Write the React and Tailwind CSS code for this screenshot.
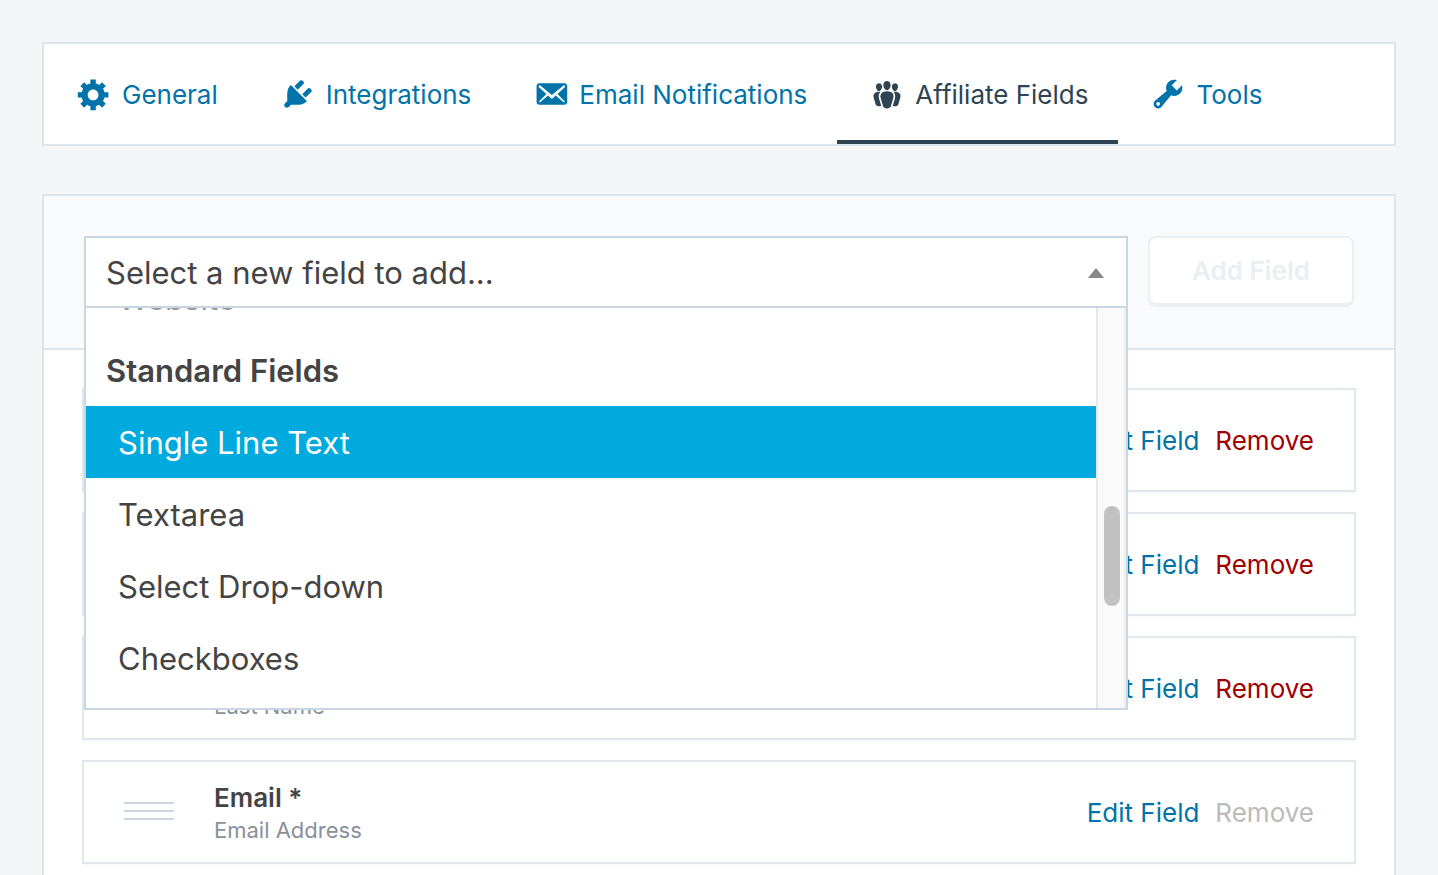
const gearPath =
  'M18 12h-2.18c-.17.7-.44 1.35-.81 1.93l1.54 1.54-2.1 2.1-1.54-1.54c-.58.36-1.23.63-1.91.79V19H8v-2.18c-.68-.16-1.33-.43-1.91-.79l-1.54 1.54-2.12-2.12 1.54-1.54c-.36-.58-.63-1.23-.79-1.91H1V9.03h2.17c.16-.7.44-1.35.8-1.94L2.43 5.55l2.1-2.1 1.54 1.54c.58-.37 1.24-.64 1.93-.81V2h3v2.18c.68.16 1.33.43 1.91.79l1.54-1.54 2.12 2.12-1.54 1.54c.36.59.64 1.24.8 1.94H18V12zm-8.5 1.5c1.66 0 3-1.34 3-3s-1.34-3-3-3-3 1.34-3 3 1.34 3 3 3z';
const plugPath =
  'M13.11 4.36L9.87 7.6 8 5.73l3.24-3.24c.35-.34 1.05-.2 1.56.32.52.51.66 1.21.31 1.55zm-8 1.77l.91-1.12 9.01 9.01-1.19.84c-.71.71-2.63 1.16-3.82 1.16H6.14L4.9 17.26c-.59.59-1.54.59-2.12 0-.59-.58-.59-1.53 0-2.12l1.24-1.24v-3.88c0-1.13.4-3.19 1.09-3.89zm7.26 3.97l3.24-3.24c.34-.35 1.04-.21 1.55.31.52.51.66 1.21.31 1.55l-3.24 3.25z';
const mailPath =
  'M19 14.5v-9c0-.83-.67-1.5-1.5-1.5H3.49c-.83 0-1.5.67-1.5 1.5v9c0 .83.67 1.5 1.5 1.5H17.5c.83 0 1.5-.67 1.5-1.5zm-1.31-9.11c.33.33.15.67-.03.84L13.6 9.95l3.9 4.06c.12.14.2.36.06.51-.13.16-.43.15-.56.05l-4.37-3.73-2.14 1.95-2.13-1.95-4.37 3.73c-.13.1-.43.11-.56-.05-.14-.15-.06-.37.06-.51l3.9-4.06-4.06-3.72c-.18-.17-.36-.51-.03-.84s.67-.17.95.07l6.24 5.04 6.25-5.04c.28-.24.62-.4.95-.07z';
const groupPath =
  'M8.03 4.46c-.29 1.28.55 3.46 1.97 3.46 1.41 0 2.25-2.18 1.96-3.46-.22-.98-1.08-1.63-1.96-1.63-.89 0-1.74.65-1.97 1.63zm-4.13.9c-.25 1.08.47 2.93 1.67 2.93s1.92-1.85 1.67-2.93c-.19-.83-.92-1.39-1.67-1.39s-1.48.56-1.67 1.39zm8.86 0c-.25 1.08.47 2.93 1.66 2.93 1.2 0 1.92-1.85 1.67-2.93-.19-.83-.92-1.39-1.67-1.39-.74 0-1.47.56-1.66 1.39zm-.59 11.43l1.25-4.3C14.2 10 12.71 8.47 10 8.47c-2.72 0-4.21 1.53-3.44 4.02l1.26 4.3C8.05 17.51 9 18 10 18c.98 0 1.94-.49 2.17-1.21zm-6.1-7.63c-.49.67-.96 1.83-.42 3.59l1.12 3.79c-.34.2-.77.31-1.2.31-.85 0-1.65-.41-1.85-1.03l-1.07-3.65c-.65-2.11.61-3.4 2.92-3.4.27 0 .54.02.79.06-.1.1-.2.22-.29.33zm8.35-.39c2.31 0 3.58 1.29 2.92 3.4l-1.07 3.65c-.2.62-1 1.03-1.85 1.03-.43 0-.86-.11-1.2-.31l1.11-3.77c.55-1.78.08-2.94-.42-3.61-.08-.11-.18-.23-.28-.33.25-.04.51-.06.79-.06z';
const wrenchPath =
  'M16.68 9.77c-1.34 1.34-3.3 1.67-4.95.99l-5.41 6.52c-.99.99-2.59.99-3.58 0s-.99-2.59 0-3.57l6.52-5.42c-.68-1.65-.35-3.61.99-4.95 1.28-1.28 3.12-1.62 4.72-1.06l-2.89 2.89 2.82 2.82 2.86-2.87c.53 1.58.18 3.39-1.08 4.65zM3.81 16.21c.4.39 1.04.39 1.43 0 .4-.4.4-1.04 0-1.43-.39-.4-1.03-.4-1.43 0-.39.39-.39 1.03 0 1.43z';

const tabs = [
  { label: 'General', path: gearPath },
  { label: 'Integrations', path: plugPath },
  { label: 'Email Notifications', path: mailPath },
  { label: 'Affiliate Fields', path: groupPath, active: true },
  { label: 'Tools', path: wrenchPath },
];

const options = [
  { label: 'Website', disabled: true },
  { label: 'Standard Fields', heading: true },
  { label: 'Single Line Text', selected: true },
  { label: 'Textarea' },
  { label: 'Select Drop-down' },
  { label: 'Checkboxes' },
];

const fields = [
  { name: 'Username', label: 'Username', required: true },
  { name: 'First Name', label: 'First Name' },
  { name: 'Last Name', label: 'Last Name' },
  { name: 'Email', label: 'Email Address', required: true, locked: true },
];

function Tab({ label, path, active }) {
  return (
    <a
      href="#"
      aria-current={active ? 'page' : undefined}
      className={`flex items-center gap-[10px] border-b-4 pt-1 pl-8 pr-[30px] whitespace-nowrap ${
        active ? 'border-[#2e4453] text-[#2e4453]' : 'border-transparent text-[#0073aa]'
      }`}
    >
      <svg viewBox="0 0 20 20" className="size-9 shrink-0" fill="currentColor" aria-hidden="true">
        <path d={path} />
      </svg>
      {label}
    </a>
  );
}

function optionClass({ heading, selected, disabled }) {
  if (heading) return 'pl-5 font-semibold';
  if (selected) return 'pl-8 bg-[#00aadf] text-white';
  if (disabled) return 'pl-8 text-[#999999]';
  return 'pl-8';
}

function FieldPicker() {
  return (
    <div className="relative min-w-0 grow text-[31px] text-[#444444]">
      <label htmlFor="new-field" className="sr-only">
        New field
      </label>
      <select
        id="new-field"
        className="block h-[72px] w-full appearance-none border-2 border-[#c8d7e1] bg-white px-5 pt-[2px] outline-none"
      >
        <option>Select a new field to add...</option>
      </select>
      <svg
        viewBox="0 0 16 10"
        className="pointer-events-none absolute right-6 top-8 h-[10px] w-4"
        fill="#888888"
        aria-hidden="true"
      >
        <path d="M0 10 8 0l8 10z" />
      </svg>

      <div className="absolute inset-x-0 top-full z-10 flex h-[402px] border-2 border-t-0 border-[#c8d7e1] bg-white">
        {/* the list is scrolled down, so it hangs from its bottom edge */}
        <ul role="listbox" className="flex grow flex-col justify-end overflow-hidden pb-[14px]">
          {options.map((option) => (
            <li
              key={option.label}
              role={option.heading ? 'presentation' : 'option'}
              aria-selected={option.heading ? undefined : Boolean(option.selected)}
              className={`h-[72px] shrink-0 leading-[74px] ${optionClass(option)}`}
            >
              {option.label}
            </li>
          ))}
        </ul>
        <div className="flex w-[30px] shrink-0 flex-col items-center border-x-2 border-l-[#e8e8e8] border-r-[#ededed] bg-[#fafafa] pt-[198px] pl-[2px]">
          <div className="h-[100px] w-4 rounded-full bg-[#c1c1c1]" />
        </div>
      </div>
    </div>
  );
}

function FieldRow({ name, label, required, locked }) {
  return (
    <li className="flex h-[104px] items-center border-2 border-[#e1e8ed] bg-white px-10 shadow-[0_2px_2px_rgba(0,0,0,0.02)]">
      <div className="flex w-[50px] shrink-0 flex-col gap-[6px] pb-[2px]" aria-hidden="true">
        <span className="h-[2px] bg-[#c8d7e1]" />
        <span className="h-[2px] bg-[#c8d7e1]" />
        <span className="h-[2px] bg-[#c8d7e1]" />
      </div>
      <div className="ml-10 grow pt-1">
        <div className="text-[26px] leading-8 font-semibold text-[#444444]">
          {name}
          {required && ' *'}
        </div>
        <div className="text-[22px] leading-8 text-[#87919b]">{label}</div>
      </div>
      <div className="flex gap-4 text-[26px]">
        <button type="button" className="text-[#0073aa]">
          Edit Field
        </button>
        <button type="button" disabled={locked} className={locked ? 'text-[#bbbbbb]' : 'text-[#a00000]'}>
          Remove
        </button>
      </div>
    </li>
  );
}

export default function App() {
  return (
    <div className="h-screen overflow-y-auto bg-[#f3f5f7] px-[42px] pt-[42px] [scrollbar-width:none] font-['Inter','Liberation_Sans',sans-serif]">
      <nav className="flex h-[104px] border-2 border-[#dce5eb] bg-white text-[26px]">
        {tabs.map((tab) => (
          <Tab key={tab.label} {...tab} />
        ))}
      </nav>

      <main className="mt-12 border-2 border-[#dce5eb] bg-white">
        <div className="flex gap-5 border-b-2 border-[#e1e8ed] bg-[#f8fafc] p-10">
          <FieldPicker />
          <button
            type="button"
            disabled
            className="h-[71px] w-[206px] shrink-0 rounded-lg border-2 border-b-4 border-[#e9eff3] bg-white text-[26px] font-semibold text-[#e9eff3]"
          >
            Add Field
          </button>
        </div>

        <ul className="flex flex-col gap-5 p-[38px]">
          {fields.map((field) => (
            <FieldRow key={field.name} {...field} />
          ))}
        </ul>
      </main>
    </div>
  );
}
